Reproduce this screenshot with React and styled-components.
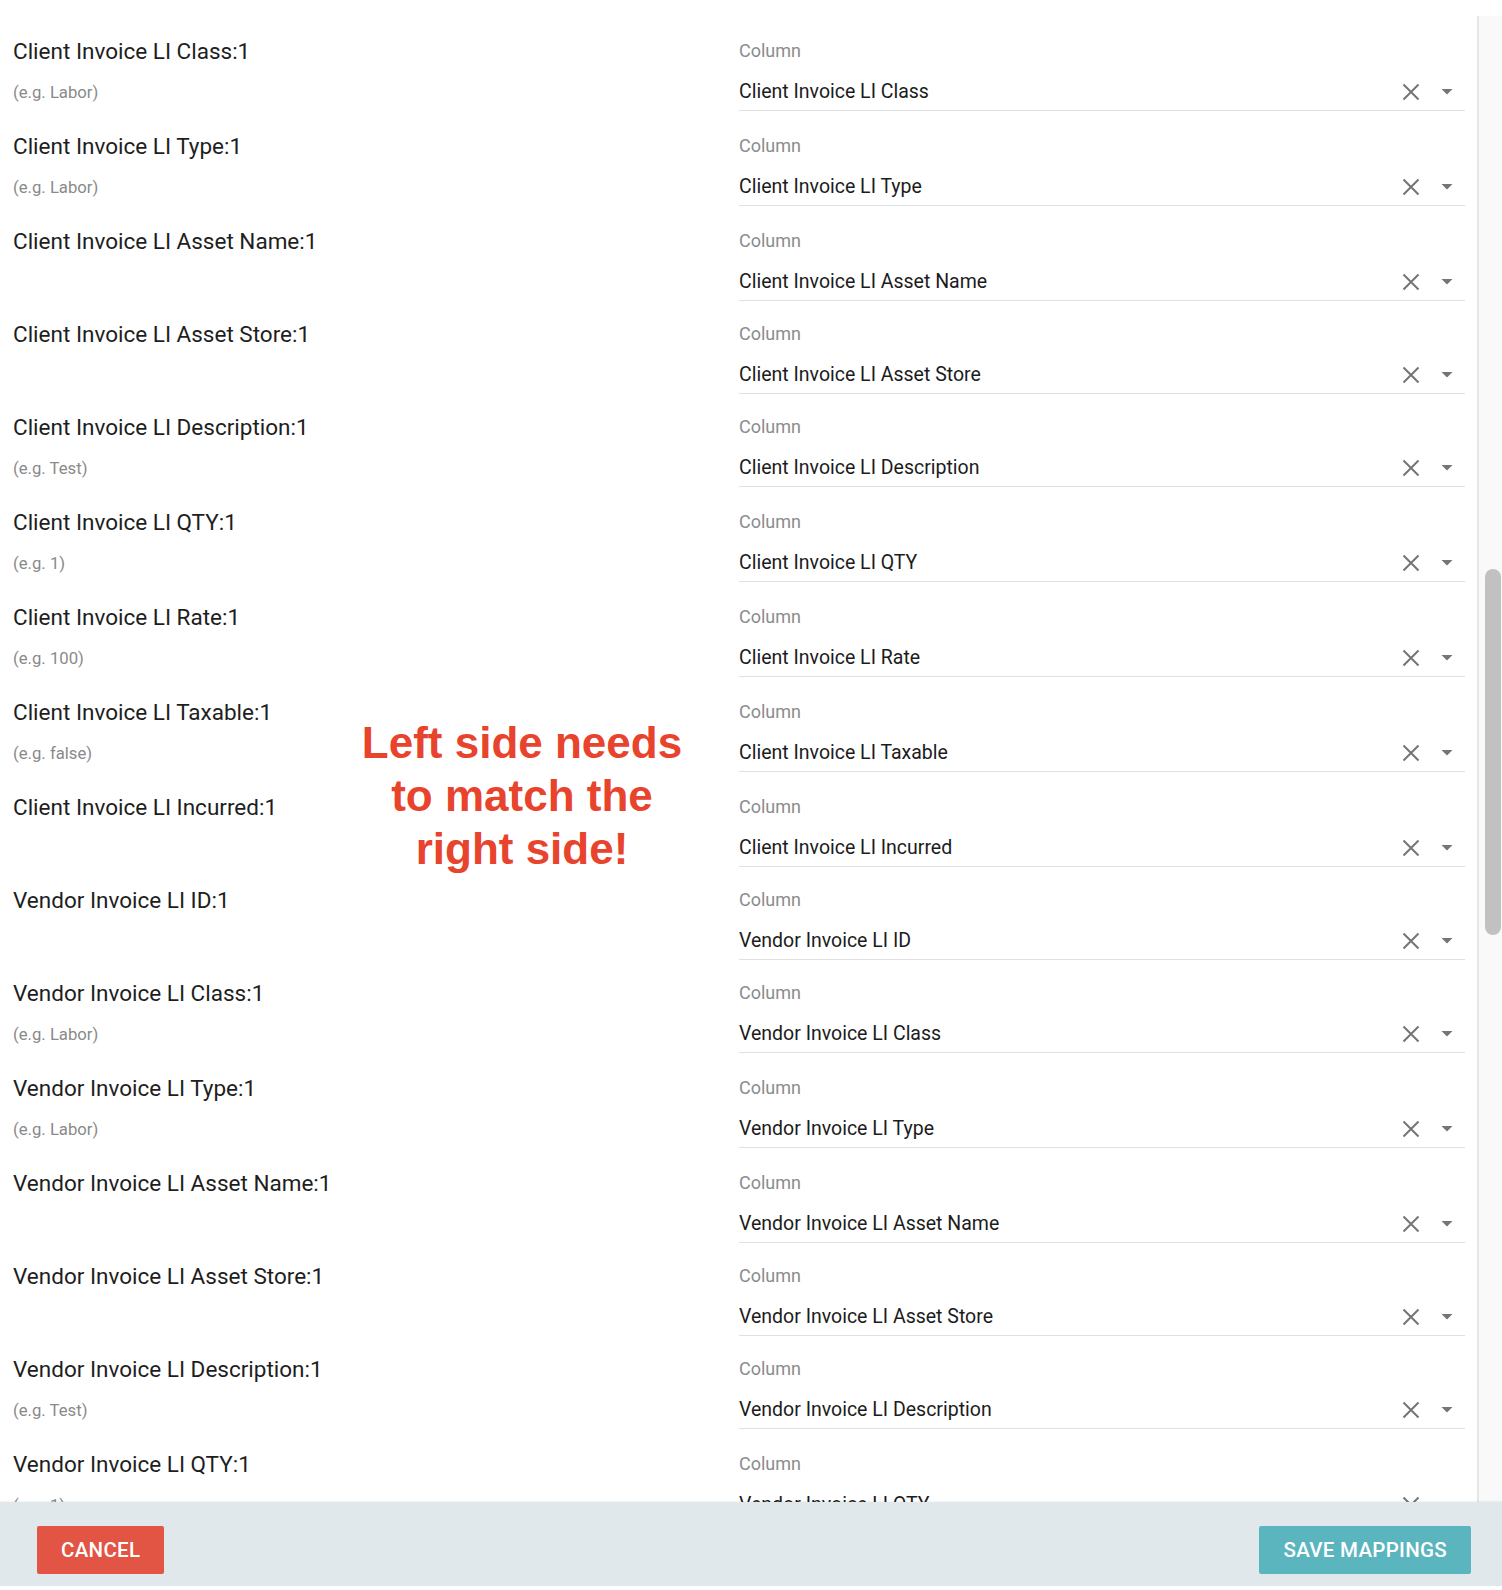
import styled, { createGlobalStyle } from "styled-components";

const GlobalStyle = createGlobalStyle`
  html, body { margin: 0; padding: 0; background: #fff; }
  body { font-family: Roboto, "Noto Sans", "Liberation Sans", sans-serif; overflow: hidden; }
  * { box-sizing: border-box; }
`;

const mappings = [
  { field: "Client Invoice LI Class", hint: "Labor" },
  { field: "Client Invoice LI Type", hint: "Labor" },
  { field: "Client Invoice LI Asset Name" },
  { field: "Client Invoice LI Asset Store" },
  { field: "Client Invoice LI Description", hint: "Test" },
  { field: "Client Invoice LI QTY", hint: "1" },
  { field: "Client Invoice LI Rate", hint: "100" },
  { field: "Client Invoice LI Taxable", hint: "false" },
  { field: "Client Invoice LI Incurred" },
  { field: "Vendor Invoice LI ID" },
  { field: "Vendor Invoice LI Class", hint: "Labor" },
  { field: "Vendor Invoice LI Type", hint: "Labor" },
  { field: "Vendor Invoice LI Asset Name" },
  { field: "Vendor Invoice LI Asset Store" },
  { field: "Vendor Invoice LI Description", hint: "Test" },
  { field: "Vendor Invoice LI QTY", hint: "1" },
  { field: "Vendor Invoice LI Rate", hint: "100" },
];

const Page = styled.div`
  height: 1590px;
  padding-top: 16px;
  display: flex;
  flex-direction: column;
`;

const Body = styled.div`
  flex: 1;
  min-height: 0;
  display: flex;
`;

const Scroller = styled.div`
  position: relative;
  flex: 1;
  overflow: hidden;
  padding: 21px 12px 0 13px;
`;

const Track = styled.div`
  width: 25px;
  border-left: 2px solid #e6e6e6;
  background: #f9f9f9;
  padding: 553px 1px 0 6px;
`;

const Thumb = styled.div`
  width: 16px;
  height: 366px;
  border-radius: 8px;
  background: #c1c1c1;
`;

const Row = styled.div`
  display: flex;
  align-items: flex-start;
  padding-bottom: 19px;
`;

const Left = styled.div`
  flex: 1;
  display: flex;
  flex-direction: column;
  padding-bottom: ${(p) => (p.$hasHint ? "8px" : "0")};
`;

const FieldName = styled.div`
  font-size: 22.5px;
  line-height: 28px;
  color: #1e1e1e;
`;

const Hint = styled.div`
  margin-top: 16px;
  font-size: 16.7px;
  line-height: 24px;
  color: #8a8a8a;
`;

const Right = styled.div`
  flex: 1;
  display: flex;
  flex-direction: column;
  padding-top: 3px;
`;

const ColumnLabel = styled.div`
  font-size: 18px;
  line-height: 22px;
  color: #8c8c8c;
`;

const SelectBox = styled.div`
  margin-top: 14px;
  display: flex;
  align-items: center;
  padding: 4px 6px 6px 0;
  border-bottom: 1px solid #e0e0e0;
`;

const SelectValue = styled.div`
  flex: 1;
  font-size: 19.5px;
  line-height: 24px;
  color: #1c1c1c;
`;

const IconBox = styled.span`
  width: 24px;
  height: 24px;
  display: flex;
  align-items: center;
  justify-content: center;
  margin-left: ${(p) => p.$gap || 0}px;
`;

const Note = styled.div`
  position: absolute;
  left: 322px;
  top: 700px;
  width: 400px;
  text-align: center;
  font-family: "Liberation Sans", Arial, sans-serif;
  font-weight: 700;
  font-size: 44px;
  line-height: 53px;
  color: #e8432d;
`;

const Footer = styled.div`
  height: 84px;
  background: #e1e8ec;
  box-shadow: 0 -1px 2px rgba(0, 0, 0, 0.06);
  display: flex;
  justify-content: space-between;
  align-items: flex-start;
  padding: 24px 31px 0 37px;
  position: relative;
`;

const BottomGap = styled.div`
  height: 4px;
  background: #fff;
`;

const Button = styled.button`
  height: 48px;
  padding: 0 24px;
  border: none;
  border-radius: 2px;
  background: ${(p) => p.$bg};
  color: #fff;
  font-family: Roboto, sans-serif;
  font-weight: 500;
  font-size: 20.5px;
  letter-spacing: 0.3px;
  text-transform: uppercase;
  cursor: pointer;
`;

const ClearIcon = () => (
  <svg width="18" height="18" viewBox="0 0 18 18">
    <path d="M1.5 1.5 L16.5 16.5 M16.5 1.5 L1.5 16.5" stroke="#757575" strokeWidth="2" fill="none" />
  </svg>
);

const ArrowIcon = () => (
  <svg width="12" height="6" viewBox="0 0 12 6">
    <path d="M0.5 0 L11.5 0 L6 5.5 Z" fill="#757575" />
  </svg>
);

const MappingRow = ({ field, hint }) => (
  <Row>
    <Left $hasHint={!!hint}>
      <FieldName>{field}:1</FieldName>
      {hint && <Hint>(e.g. {hint})</Hint>}
    </Left>
    <Right>
      <ColumnLabel>Column</ColumnLabel>
      <SelectBox>
        <SelectValue>{field}</SelectValue>
        <IconBox>
          <ClearIcon />
        </IconBox>
        <IconBox $gap={12}>
          <ArrowIcon />
        </IconBox>
      </SelectBox>
    </Right>
  </Row>
);

export default function App() {
  return (
    <>
      <GlobalStyle />
      <Page>
        <Body>
          <Scroller>
            {mappings.map((m) => (
              <MappingRow key={m.field} {...m} />
            ))}
            <Note>
              Left side needs
              <br />
              to match the
              <br />
              right side!
            </Note>
          </Scroller>
          <Track>
            <Thumb />
          </Track>
        </Body>
        <Footer>
          <Button $bg="#e25443">Cancel</Button>
          <Button $bg="#5bb5bf">Save Mappings</Button>
        </Footer>
        <BottomGap />
      </Page>
    </>
  );
}
